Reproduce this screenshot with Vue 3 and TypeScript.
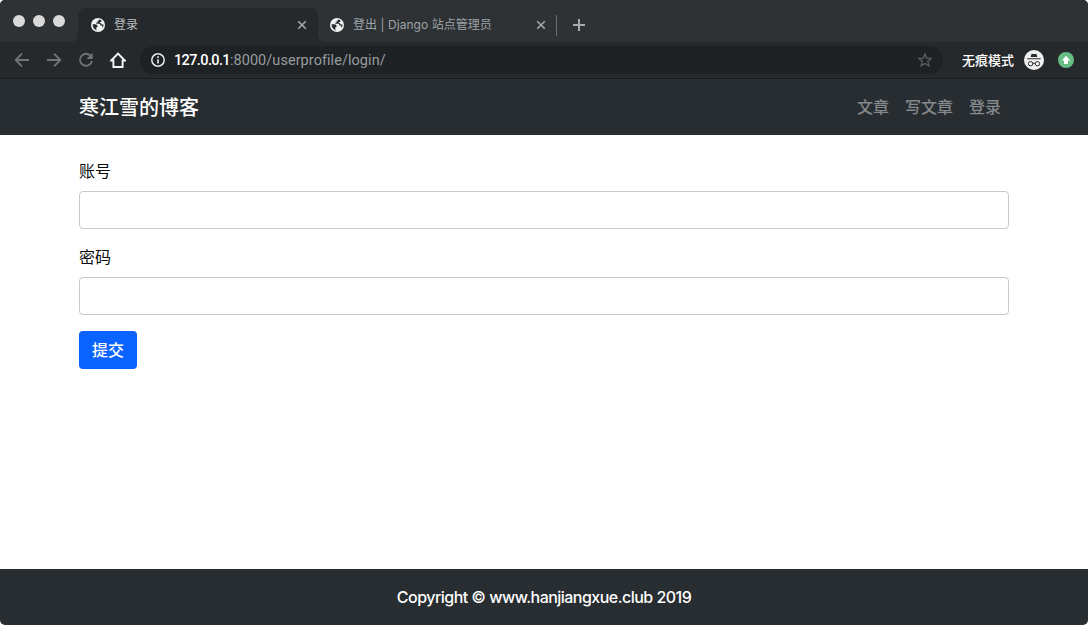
<script setup lang="ts">
import { ref } from 'vue'

interface Tab { id: string; title: string; active: boolean }
interface Field { id: string; label: string; type: string }

const tabs: Tab[] = [
  { id: 'login', title: '登录', active: true },
  { id: 'logout', title: '登出 | Django 站点管理员', active: false },
]
const links: string[] = ['文章', '写文章', '登录']
const fields: Field[] = [
  { id: 'username', label: '账号', type: 'text' },
  { id: 'password', label: '密码', type: 'password' },
]
const values = ref<Record<string, string>>({ username: '', password: '' })
</script>

<template>
  <div class="window">
    <div class="tabstrip">
      <div class="lights"><i v-for="n in 3" :key="n" /></div>
      <div v-for="tab in tabs" :key="tab.id" class="tab" :class="{ active: tab.active }">
        <svg class="globe" width="14" height="14" viewBox="0 0 14 14">
          <circle cx="7" cy="7" r="7" fill="#f1f2f2" />
          <path d="M1.5 6.2H4.2Q6.6 6.4 6.6 8.2Q6.5 9.4 5.2 9.5V11.2L6.2 12.4Q2 11.7 1.5 6.2ZM8.3 1.6Q8.2 2.8 6.6 3V4.4H5.3V5.8H8.4Q9.3 6.2 9.4 7.4H10.6Q11.6 7.7 11.5 9.9Q12.6 8.5 12.5 6.4H10.7L9.8 5H8.8V3.9H10.4V2.4Q9.5 1.8 8.3 1.6Z" fill="#282c2f" />
        </svg>
        <span class="title">{{ tab.title }}</span>
        <svg class="close" width="10" height="10" viewBox="0 0 10 10"><path d="M1.2 1.2 8.8 8.8M8.8 1.2 1.2 8.8" /></svg>
      </div>
      <span class="divider" />
      <svg class="plus" width="12" height="12" viewBox="0 0 12 12"><path d="M6 0V12M0 6H12" /></svg>
    </div>

    <div class="toolbar">
      <svg class="nav dim" viewBox="0 0 16 16"><path d="M15 8H2M8 1.7 1.7 8 8 14.3" /></svg>
      <svg class="nav dim" viewBox="0 0 16 16"><path d="M1 8H14M8 1.7 14.3 8 8 14.3" /></svg>
      <svg class="nav dim" viewBox="0 0 16 16"><path d="M12.8 4.1A6 6 0 1 0 13.9 9" /><path d="M14.6 1V7H8.6Z" class="solid" /></svg>
      <svg class="nav home" viewBox="0 0 16 16"><path d="M1.2 8.5 8 1.5 14.8 8.5H12.6V15H3.4V8.5Z" /></svg>
      <div class="omnibox">
        <svg width="14" height="14" viewBox="0 0 14 14">
          <circle cx="7" cy="7" r="6.2" fill="none" stroke="#e8eaed" stroke-width="1.5" />
          <path d="M7 6.2V10.5M7 3.3V4.9" stroke="#e8eaed" stroke-width="1.6" />
        </svg>
        <span class="url"><b>127.0.0.1</b>:8000/userprofile/login/</span>
        <svg class="star" width="14" height="14" viewBox="0 0 14 14"><path d="M7 1 8.7 5.1 13.2 5.4 9.8 8.3 10.9 12.8 7 10.4 3.1 12.8 4.2 8.3 .8 5.4 5.3 5.1Z" /></svg>
      </div>
      <span class="mode">无痕模式</span>
      <svg class="incognito" width="20" height="20" viewBox="0 0 20 20">
        <circle cx="10" cy="10" r="10" fill="#f1f1f1" />
        <path d="M6.6 6.9 7.6 3.7 8.8 4.1H11.2L12.4 3.7 13.4 6.9ZM3.2 8.3H16.8V9.3H3.2Z" fill="#2b2e31" />
        <g fill="none" stroke="#2b2e31" stroke-width="1"><circle cx="6.6" cy="13.7" r="2.2" /><circle cx="13.4" cy="13.7" r="2.2" /><path d="M8.8 13.5Q10 12.8 11.2 13.5" /></g>
      </svg>
      <svg class="update" width="16" height="16" viewBox="0 0 16 16">
        <circle cx="8" cy="8" r="8" fill="#67bd83" />
        <path d="M8 3.8 12.2 8.4H10V11.9H6V8.4H3.8Z" fill="#fff" />
      </svg>
    </div>

    <header class="navbar">
      <span class="brand">寒江雪的博客</span>
      <nav><a v-for="link in links" :key="link">{{ link }}</a></nav>
    </header>

    <main>
      <form @submit.prevent>
        <div v-for="field in fields" :key="field.id" class="group">
          <label :for="field.id">{{ field.label }}</label>
          <input :id="field.id" v-model="values[field.id]" :type="field.type">
        </div>
        <button type="submit">提交</button>
      </form>
    </main>

    <footer><span>Copyright © www.hanjiangxue.club 2019</span></footer>
  </div>
</template>

<style>
html, body { background: #fff; }
</style>

<style scoped>
* { box-sizing: border-box; }
.window {
  width: 1088px; height: 625px; overflow: hidden; border-radius: 5px;
  display: flex; flex-direction: column; background: #fff;
  font-family: Inter, "Noto Sans CJK SC", sans-serif;
}
svg { display: block; flex: none; }
.tabstrip { height: 42px; flex: none; display: flex; background: #25292c; }
.lights {
  width: 78px; height: 42px; padding: 15px 0 0 13px; display: flex; gap: 8px;
  background: #2e3235; border-bottom-right-radius: 7px;
}
.lights i { width: 12px; height: 12px; border-radius: 50%; background: #d9d9d9; }
.tab { height: 42px; display: flex; align-items: center; padding-top: 8px; background: #2e3235; color: #9da2a5; }
.tab .title { margin-left: 9px; font-size: 12px; line-height: 18px; white-space: nowrap; letter-spacing: 0.05px; }
.tab .close { margin-left: auto; fill: none; stroke: #a4a8aa; stroke-width: 1.6; }
.tab.active {
  width: 240px; padding-left: 13px; padding-right: 11px; color: #b8bcbe;
  background: #25292c; position: relative;
}
.tab.active::before {
  content: ""; position: absolute; left: 0; top: 0; width: 240px; height: 42px;
  background: linear-gradient(#2e3235 0 8px, transparent 8px);
}
.tab.active::after {
  content: ""; position: absolute; left: 0; top: 8px; width: 240px; height: 34px;
  border-radius: 8px 8px 0 0; box-shadow: 0 0 0 8px #2e3235; clip-path: inset(-8px 0 26px 0);
}
.tab:not(.active) { width: 238px; padding-left: 12px; padding-right: 10px; border-bottom-left-radius: 7px; }
.divider { width: 1px; height: 42px; background: linear-gradient(#2e3235 0 15px, #6a6e70 15px 36px, #2e3235 36px); }
.plus { width: 531px; height: 42px; padding: 19px 503px 11px 16px; background: #2e3235; fill: none; stroke: #a6aaac; stroke-width: 2; }
.toolbar {
  height: 37px; flex: none; display: flex; align-items: center; padding-left: 14px; padding-bottom: 1px;
  background: #25292c; border-bottom: 1px solid #1a1d1f;
}
.nav { width: 16px; height: 16px; margin-right: 16px; fill: none; stroke-width: 1.8; }
.dim { stroke: #717578; }
.solid { fill: #717578; stroke: none; }
.home { stroke: #f4f4f4; stroke-width: 1.9; margin-right: 14px; }
.omnibox {
  width: 803px; height: 28px; border-radius: 14px; background: #1e2225; display: flex;
  align-items: center; padding: 0 11px;
}
.url { margin-left: 9px; padding-top: 2px; font-family: Roboto, sans-serif; font-size: 14.5px; color: #989c9f; line-height: 20px; letter-spacing: 0.05px; }
.url b { font-weight: 500; color: #fff; letter-spacing: -0.62px; }
.star { margin-left: auto; fill: none; stroke: #5f6366; stroke-width: 1.2; }
.mode { margin-left: 19px; color: #fff; font-size: 13px; font-weight: 500; line-height: 20px; }
.incognito { margin-left: 10px; }
.update { margin-left: 14px; }
.navbar {
  height: 56px; flex: none; display: flex; align-items: center; justify-content: space-between;
  padding: 0 87px 0 79px; background: #282d31;
}
.brand { padding-top: 1px; color: #fff; font-size: 20px; font-weight: 500; line-height: 30px; }
nav { display: flex; gap: 16px; }
nav a { color: #85898b; font-size: 16px; font-weight: 500; line-height: 24px; }
main { flex: 1; padding: 24px 79px 0; }
.group { margin-bottom: 16px; }
label { display: block; height: 24px; margin-bottom: 8px; font-size: 16px; line-height: 24px; color: #080a0c; }
input { display: block; width: 100%; height: 38px; border: 1px solid #c4cad2; border-radius: 4px; background: #fff; padding: 6px 12px; outline: none; }
button {
  width: 58px; height: 38px; border: 0; border-radius: 4px; background: #0a62ff; color: #fff;
  font: 500 16px/24px Inter, "Noto Sans CJK SC", sans-serif; padding: 0;
}
footer { height: 56px; flex: none; display: flex; align-items: center; justify-content: center; background: #282d31; color: #fff; font-size: 16px; font-weight: 500; letter-spacing: -0.53px; }
</style>
